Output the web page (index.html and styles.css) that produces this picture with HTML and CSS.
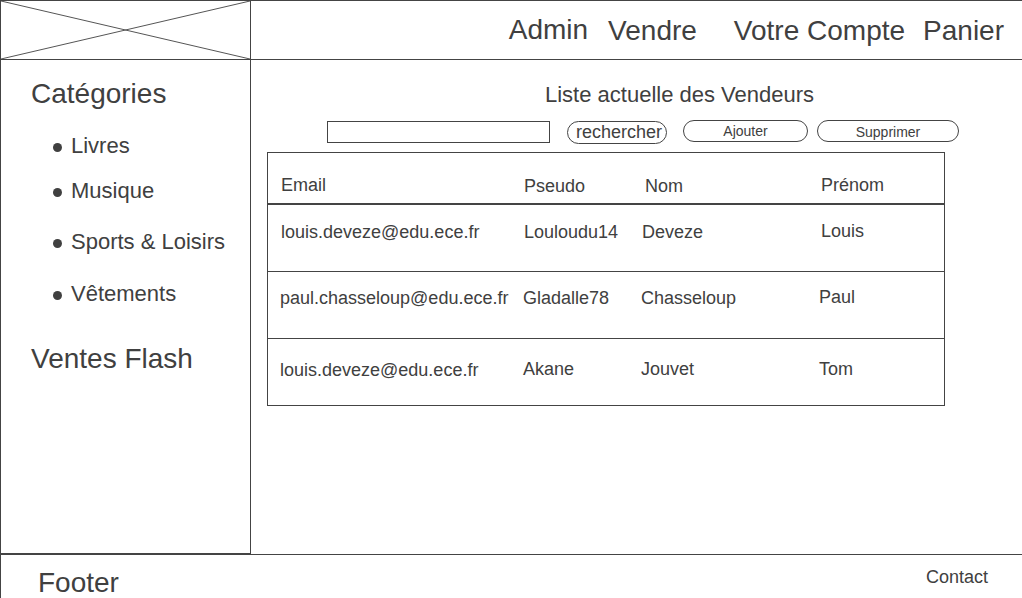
FILE: index.html
```html
<!DOCTYPE html>
<html lang="fr">
<head>
<meta charset="utf-8">
<title>Liste actuelle des Vendeurs</title>
<link rel="stylesheet" href="styles.css">
</head>
<body>
<div class="page">
  <header class="header">
    <div class="logo">
      <svg viewBox="0 0 249 58" preserveAspectRatio="none" aria-hidden="true">
        <line x1="0" y1="0" x2="249" y2="58"/>
        <line x1="0" y1="58" x2="249" y2="0"/>
      </svg>
    </div>
    <nav class="nav">
      <a class="nav-item nav-admin">Admin</a>
      <a class="nav-item nav-vendre">Vendre</a>
      <a class="nav-item nav-compte">Votre Compte</a>
      <a class="nav-item nav-panier">Panier</a>
    </nav>
  </header>
  <div class="main">
    <aside class="sidebar">
      <h2 class="side-title">Catégories</h2>
      <ul class="cat-list">
        <li class="cat cat-1">Livres</li>
        <li class="cat cat-2">Musique</li>
        <li class="cat cat-3">Sports &amp; Loisirs</li>
        <li class="cat cat-4">Vêtements</li>
      </ul>
      <h2 class="side-title flash">Ventes Flash</h2>
    </aside>
    <section class="content">
      <h1 class="title">Liste actuelle des Vendeurs</h1>
      <div class="toolbar">
        <input class="search" type="text" aria-label="recherche">
        <button class="btn btn-search">rechercher</button>
        <button class="btn btn-small btn-add">Ajouter</button>
        <button class="btn btn-small btn-del">Supprimer</button>
      </div>
      <div class="table">
        <div class="row head">
          <span class="c1">Email</span><span class="c2 lower">Pseudo</span><span class="c3 lower">Nom</span><span class="c4">Prénom</span>
        </div>
        <div class="row r1">
          <span class="c1">louis.deveze@edu.ece.fr</span><span class="c2">Louloudu14</span><span class="c3 shift">Deveze</span><span class="c4 up">Louis</span>
        </div>
        <div class="row r2">
          <span class="c1 left">paul.chasseloup@edu.ece.fr</span><span class="c2 left">Gladalle78</span><span class="c3 shift2">Chasseloup</span><span class="c4 left2 up">Paul</span>
        </div>
        <div class="row r3">
          <span class="c1 left">louis.deveze@edu.ece.fr</span><span class="c2 left up">Akane</span><span class="c3 shift2 up">Jouvet</span><span class="c4 left2 up">Tom</span>
        </div>
      </div>
    </section>
  </div>
  <footer class="footer">
    <span class="footer-title">Footer</span>
    <a class="contact">Contact</a>
  </footer>
</div>
</body>
</html>
```

FILE: styles.css
```css
* { box-sizing: border-box; }

html, body {
  margin: 0;
  padding: 0;
  background: #fff;
}

body {
  width: 1022px;
  height: 598px;
  overflow: hidden;
  font-family: "Liberation Sans", Arial, sans-serif;
  color: #404040;
}

.page {
  width: 1022px;
  height: 598px;
  border-left: 1px solid #444;
  border-top: 1px solid #444;
  display: flex;
  flex-direction: column;
}

/* Header */
.header {
  height: 59px;
  flex: none;
  display: flex;
  border-bottom: 1px solid #444;
}

.logo {
  width: 250px;
  height: 58px;
  flex: none;
  border-right: 1px solid #444;
}

.logo svg {
  display: block;
  width: 100%;
  height: 100%;
}

.logo line {
  stroke: #555;
  stroke-width: 1;
  vector-effect: non-scaling-stroke;
}

.nav {
  flex: 1;
  display: flex;
  justify-content: flex-end;
  align-items: flex-start;
  padding: 13px 18px 0 0;
}

.nav-item {
  font-size: 28px;
  line-height: 32px;
  color: #404040;
  text-decoration: none;
}

.nav-vendre { margin-left: 20px; margin-top: 1px; }
.nav-compte { margin-left: 37px; margin-top: 1px; }
.nav-panier { margin-left: 18px; margin-top: 1px; }

/* Main */
.main {
  height: 494px;
  flex: none;
  display: flex;
}

.sidebar {
  width: 250px;
  flex: none;
  border-right: 1px solid #444;
  border-bottom: 1px solid #444;
  padding: 18px 0 0 30px;
}

.side-title {
  margin: 0;
  font-size: 28px;
  line-height: 32px;
  font-weight: normal;
}

.side-title.flash { margin-top: 36px; }

.cat-list {
  list-style: none;
  margin: 0;
  padding: 0 0 0 22px;
}

.cat {
  display: flex;
  align-items: center;
  font-size: 22px;
  line-height: 26px;
}

.cat::before {
  content: "";
  width: 9px;
  height: 9px;
  border-radius: 50%;
  background: #404040;
  margin: 2px 9px 0 0;
  flex: none;
}

.cat-1 { margin-top: 23px; }
.cat-2 { margin-top: 19px; }
.cat-3 { margin-top: 25px; }
.cat-4 { margin-top: 26px; }

/* Content */
.content {
  flex: 1;
  padding-top: 22px;
}

.title {
  margin: 0 0 0 294px;
  font-size: 22px;
  line-height: 26px;
  font-weight: normal;
}

.toolbar {
  display: flex;
  align-items: flex-start;
  height: 23px;
  margin: 13px 0 0 76px;
}

.search {
  width: 223px;
  height: 22px;
  margin: 0;
  border: 1px solid #444;
  padding: 0;
  background: #fff;
}

.btn {
  font-family: "Liberation Sans", Arial, sans-serif;
  color: #404040;
  background: #fff;
  border: 1px solid #444;
  padding: 0;
  margin: 0;
}

.btn-search {
  margin-left: 17px;
  width: 100px;
  height: 23px;
  border-radius: 12px;
  font-size: 18px;
  line-height: 20px;
  padding: 0 0 2px 4px;
}

.btn-small {
  height: 22px;
  margin-top: -1px;
  border-radius: 11px;
  font-size: 14px;
  line-height: 20px;
}

.btn-add { margin-left: 16px; width: 125px; }
.btn-del { margin-left: 9px; width: 142px; padding-top: 1px; }

/* Table */
.table {
  margin: 8px 0 0 16px;
  width: 678px;
  border: 1px solid #444;
}

.row {
  display: grid;
  grid-template-columns: 243px 121px 176px 1fr;
  align-items: start;
  padding-left: 13px;
  font-size: 18px;
  line-height: 21px;
}

.row.head {
  height: 52px;
  border-bottom: 2px solid #444;
  padding-top: 22px;
}

.row.r1 {
  height: 67px;
  border-bottom: 1px solid #444;
  padding-top: 17px;
}

.row.r2 {
  height: 67px;
  border-bottom: 1px solid #444;
  padding-top: 16px;
}

.row.r3 {
  height: 66px;
  padding-top: 21px;
}

.row .lower { margin-top: 1px; }
.row .up { margin-top: -1px; }
.row .left { margin-left: -1px; }
.row .left2 { margin-left: -2px; }
.row .shift { margin-left: -3px; }
.row .shift2 { margin-left: -4px; }

/* Footer */
.footer {
  flex: 1;
  border-top: 1px solid #444;
  display: flex;
  justify-content: space-between;
  align-items: flex-start;
  padding: 0 34px 0 37px;
}

.footer-title {
  font-size: 28px;
  line-height: 32px;
  margin-top: 12px;
}

.contact {
  font-size: 18px;
  line-height: 21px;
  margin-top: 12px;
  color: #404040;
}
```
